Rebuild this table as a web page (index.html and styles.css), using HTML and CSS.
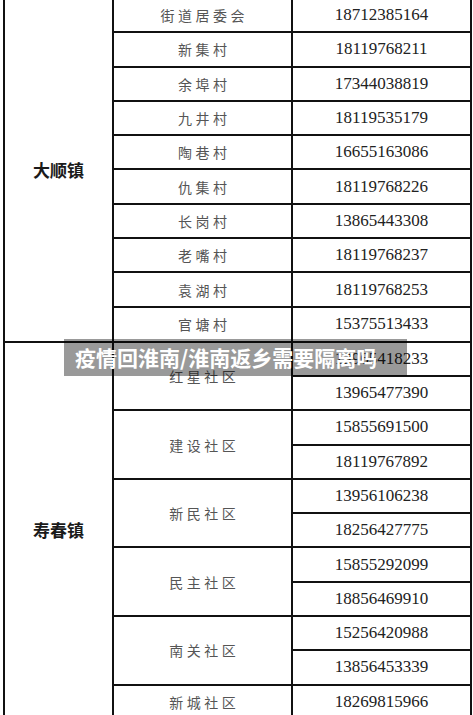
FILE: index.html
```html
<!DOCTYPE html>
<html lang="zh-CN">
<head>
<meta charset="utf-8">
<title>大顺镇 寿春镇 联系电话</title>
<link rel="stylesheet" href="styles.css">
</head>
<body>
<div class="page">
  <table class="contacts">
    <colgroup>
      <col class="c-town">
      <col class="c-name">
      <col class="c-phone">
    </colgroup>
    <tbody>
      <tr><td class="town" rowspan="10">大顺镇</td><td class="name">街道居委会</td><td class="phone">18712385164</td></tr>
      <tr><td class="name">新集村</td><td class="phone">18119768211</td></tr>
      <tr><td class="name">余埠村</td><td class="phone">17344038819</td></tr>
      <tr><td class="name">九井村</td><td class="phone">18119535179</td></tr>
      <tr><td class="name">陶巷村</td><td class="phone">16655163086</td></tr>
      <tr><td class="name">仇集村</td><td class="phone">18119768226</td></tr>
      <tr><td class="name">长岗村</td><td class="phone">13865443308</td></tr>
      <tr><td class="name">老嘴村</td><td class="phone">18119768237</td></tr>
      <tr><td class="name">袁湖村</td><td class="phone">18119768253</td></tr>
      <tr class="tall"><td class="name">官塘村</td><td class="phone">15375513433</td></tr>

      <tr><td class="town" rowspan="11">寿春镇</td><td class="name" rowspan="2">红星社区</td><td class="phone">13965418233</td></tr>
      <tr><td class="phone">13965477390</td></tr>
      <tr><td class="name" rowspan="2">建设社区</td><td class="phone">15855691500</td></tr>
      <tr><td class="phone">18119767892</td></tr>
      <tr><td class="name" rowspan="2">新民社区</td><td class="phone">13956106238</td></tr>
      <tr><td class="phone">18256427775</td></tr>
      <tr><td class="name" rowspan="2">民主社区</td><td class="phone">15855292099</td></tr>
      <tr><td class="phone">18856469910</td></tr>
      <tr><td class="name" rowspan="2">南关社区</td><td class="phone">15256420988</td></tr>
      <tr><td class="phone">13856453339</td></tr>
      <tr><td class="name">新城社区</td><td class="phone">18269815966</td></tr>
    </tbody>
  </table>
  <div class="banner">疫情回淮南/淮南返乡需要隔离吗</div>
</div>
</body>
</html>
```

FILE: styles.css
```css
html, body {
  margin: 0;
  padding: 0;
  background: #ffffff;
}

body {
  font-family: "Noto Sans CJK SC", "Noto Sans", sans-serif;
  overflow: hidden;
}

.page {
  position: relative;
  width: 473px;
  height: 715px;
  overflow: hidden;
  background: #ffffff;
}

.contacts {
  border-collapse: collapse;
  table-layout: fixed;
  width: 467px;
  margin: -3px 0 0 3px;
}

.c-town { width: 109px; }
.c-name { width: 179px; }
.c-phone { width: 179px; }

.contacts td {
  border: 2px solid #111111;
  padding: 0;
  height: 32.3px;
  line-height: 20px;
  text-align: center;
  vertical-align: middle;
}

.contacts tr.tall td {
  height: 33px;
}

.town {
  font-size: 17px;
  font-weight: 700;
  color: #1a1a1a;
}

.name {
  font-size: 14px;
  letter-spacing: 3.5px;
  text-indent: 3.5px;
  color: #555555;
  font-weight: 400;
}

.phone {
  font-family: "Liberation Serif", "Times New Roman", serif;
  font-size: 17px;
  color: #222222;
}

.banner {
  position: absolute;
  left: 64px;
  top: 339px;
  width: 332px;
  height: 37px;
  padding-left: 11px;
  background: rgba(0, 0, 0, 0.4);
  color: #ffffff;
  font-size: 21px;
  font-weight: 700;
  line-height: 37px;
  white-space: nowrap;
}
```
